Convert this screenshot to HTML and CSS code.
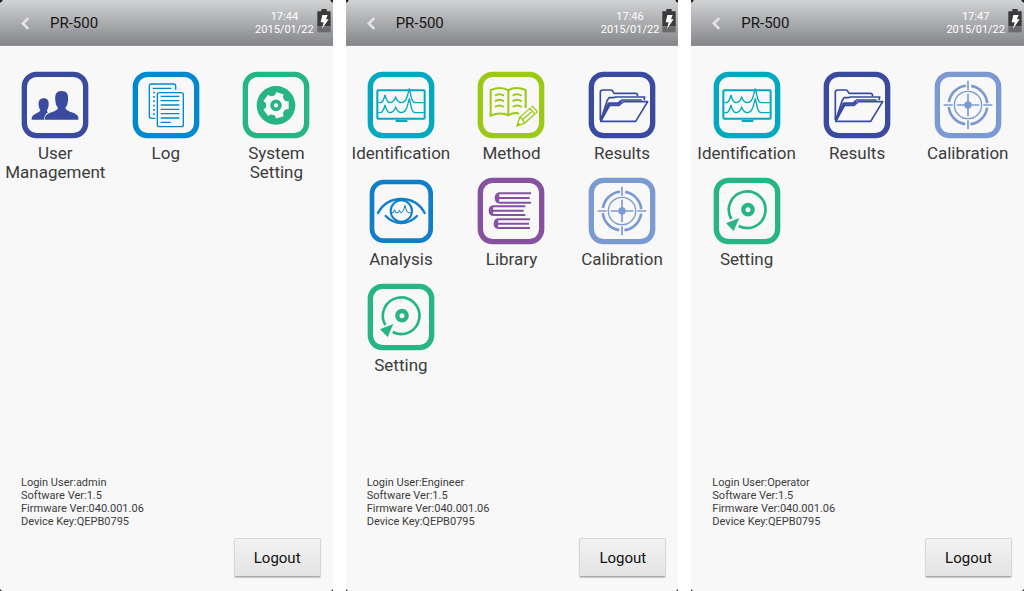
FILE: index.html
```html
<!DOCTYPE html>
<html lang="en">
<head>
  <meta charset="UTF-8">
  <meta name="viewport" content="width=device-width, initial-scale=1.0">
  <title>PR-500</title>
  <link rel="stylesheet" href="styles.css">
</head>
<body>
  <!-- Icon set -->
  <svg class="sprite" aria-hidden="true">
    <symbol id="frame" viewBox="0 0 204 204">
      <rect x="10" y="10" width="184" height="184" rx="37" fill="none" stroke="currentColor" stroke-width="16"/>
    </symbol>
    <symbol id="back" viewBox="0 0 8 12">
      <path d="M7 1 L2 6 L7 11" fill="none" stroke="currentColor" stroke-width="2.4"/>
    </symbol>
    <symbol id="battery" viewBox="0 0 42 72">
      <path d="M13 0h16v7h12v45H1V7h12z" fill="#3a3a3c"/>
      <path d="M1 52h40v18H1z" fill="#6b6b6e"/>
      <path d="M16 18h16l-5 13h8L15 59l5-19h-9z" fill="#fff"/>
    </symbol>
    <symbol id="users" viewBox="0 0 204 204">
      <g fill="currentColor">
        <path d="M72 146v-7q2-9 20-15q19-7 19-13q-7-7-8-22c-2-21 4-29 19-29s21 8 19 29q-1 15-8 22q0 6 19 13q18 6 20 15v7z"/>
        <path d="M32 146v-6q2-7 15-13q10-4 11-9q-4-5-5-15c-1-15 4-21 15-21s16 6 15 21q-1 10-5 15q0 4 3 6q-10 6-11 14v8z"/>
      </g>
    </symbol>
    <symbol id="log" viewBox="0 0 204 204">
      <g fill="none" stroke="currentColor" stroke-width="4">
        <path d="M131 56V45q0-6-6-6H58q-6 0-6 6v91q0 6 6 6h12M62 52h56"/>
        <path d="M66 62v72" stroke-width="5" stroke-dasharray="5 8"/>
        <rect x="76" y="65" width="78" height="102" rx="6"/>
        <path d="M86 76h56M86 89h56M86 102h56M86 115h56M86 128h56M86 141h56M86 154h30"/>
      </g>
    </symbol>
    <symbol id="gear" viewBox="0 0 204 204">
      <circle cx="102" cy="103" r="58" fill="currentColor"/>
      <g class="cutout">
        <circle cx="102" cy="103" r="30"/>
        <path id="tooth" d="M122 86l11 5h7v24h-7l-11 5z"/>
        <use href="#tooth" transform="rotate(72 102 103)"/>
        <use href="#tooth" transform="rotate(144 102 103)"/>
        <use href="#tooth" transform="rotate(216 102 103)"/>
        <use href="#tooth" transform="rotate(288 102 103)"/>
      </g>
      <circle cx="102" cy="103" r="12" fill="none" stroke="currentColor" stroke-width="11"/>
    </symbol>
    <symbol id="monitor" viewBox="0 0 204 204">
      <g fill="none" stroke="currentColor" stroke-width="4">
        <rect x="31" y="58" width="142" height="85" rx="3" stroke-width="6"/>
        <path d="M86 150h35" stroke-width="6"/>
        <path d="M34 95h6c7 0 10-7 14-23c4 16 7 23 15 23s12-3 17-16c5 13 9 16 17 16c13 0 17-13 24-43c7 33 8 43 19 43h24"/>
        <path d="M34 125h6c7 0 10-7 14-23c4 16 7 23 15 23s12-3 17-16c5 13 9 16 17 16c13 0 17-13 24-43c7 33 8 43 19 43h24"/>
      </g>
    </symbol>
    <symbol id="book" viewBox="0 0 204 204">
      <g fill="none" stroke="currentColor" stroke-width="6">
        <path d="M94 58Q72 44 41 57V134Q70 122 94 133Q112 123 126 128M94 133V58Q116 44 146 57V111"/>
        <path d="M54 74q13-9 27 0M54 91q13-9 27 0M54 108q13-9 27 0M107 74q13-9 27 0M107 91q13-9 27 0M107 108q13-9 27 0" stroke-width="6"/>
        <path d="M120 165l8-26l31-27l15 17l-32 28zM128 139q11 3 14 18M163 109l4-3l14 16l-4 4M135 147l29-25" stroke-width="4"/>
        <path d="M120 165l3-11l8 7z" fill="currentColor" stroke="none"/>
      </g>
    </symbol>
    <symbol id="folder" viewBox="0 0 204 204">
      <g fill="none" stroke="currentColor" stroke-width="5" stroke-linejoin="round">
        <path d="M37 148V64q0-7 7-7h25q4 0 6 5l3 5h65q6 0 6 9"/>
        <path d="M38 149l19-59l6-10h13l7-2h87l-2 9"/>
        <path d="M38 149l24-52h28l11-10h60"/>
        <path d="M38 151l27-48h28l13-11h73l-36 59z"/>
        <path d="M38 148l24-50h29l8-8" stroke-width="7"/>
      </g>
    </symbol>
    <symbol id="eye" viewBox="0 0 204 204">
      <g fill="none" stroke="currentColor" stroke-width="7" stroke-linecap="round">
        <rect x="15" y="15" width="176" height="176" rx="35" stroke-width="14"/>
        <path d="M33 108C48 80 73 66 103 66s55 14 70 42"/>
        <path d="M56 117q20 21 47 21t47-21"/>
        <circle cx="103" cy="102" r="32" stroke-width="6"/>
        <path d="M74 107h5l4-9l3 9h7l4-7l4 7q8 0 13-22q5 22 10 22h6" stroke-width="3"/>
      </g>
    </symbol>
    <symbol id="books" viewBox="0 0 204 204">
      <g fill="none" stroke="currentColor" stroke-width="6">
        <path d="M162 49H70q-14 0-14 14t14 14H162M66 63h92"/>
        <path d="M145 88H52q-14 0-14 13t14 13H145M48 101h92"/>
        <path d="M159 127H67q-14 0-14 13t14 13H159M63 140h93"/>
        <path d="M62 52v22M44 91v20M59 130v20" stroke-width="9"/>
      </g>
    </symbol>
    <symbol id="target" viewBox="0 0 204 204">
      <g fill="none" stroke="currentColor" stroke-width="5">
        <circle cx="102" cy="102" r="58" stroke-width="8" stroke-dasharray="75.1 16" stroke-dashoffset="-8"/>
        <circle cx="102" cy="102" r="41" stroke-width="4"/>
        <path d="M102 29v27M102 148v27M29 102h27M148 102h27M102 68v68M68 102h68"/>
        <circle cx="102" cy="102" r="11" fill="currentColor" stroke="none"/>
      </g>
    </symbol>
    <symbol id="disc" viewBox="0 0 204 204">
      <g fill="none" stroke="currentColor" stroke-width="8">
        <path d="M55 126A55 55 0 1 1 77 147"/>
        <circle cx="105" cy="98" r="14" stroke-width="13"/>
        <path d="M39 139l40-16l-17 39z" fill="currentColor" stroke="none"/>
      </g>
    </symbol>
  </svg>

  <main class="screens">
    <section class="screen">
      <header class="topbar">
        <button class="back" aria-label="Back"><svg><use href="#back"/></svg></button>
        <h1>PR-500</h1>
        <div class="clock">17:44<br>2015/01/22</div>
        <svg class="battery"><use href="#battery"/></svg>
      </header>
      <nav class="apps">
        <a href="#" class="app indigo"><svg><use href="#frame"/><use href="#users"/></svg><span>User Management</span></a>
        <a href="#" class="app blue"><svg><use href="#frame"/><use href="#log"/></svg><span>Log</span></a>
        <a href="#" class="app green"><svg><use href="#frame"/><use href="#gear"/></svg><span>System Setting</span></a>
      </nav>
      <footer class="bottom">
        <p class="info">Login User:admin<br>Software Ver:1.5<br>Firmware Ver:040.001.06<br>Device Key:QEPB0795</p>
        <button class="logout">Logout</button>
      </footer>
    </section>

    <section class="screen">
      <header class="topbar">
        <button class="back" aria-label="Back"><svg><use href="#back"/></svg></button>
        <h1>PR-500</h1>
        <div class="clock">17:46<br>2015/01/22</div>
        <svg class="battery"><use href="#battery"/></svg>
      </header>
      <nav class="apps">
        <a href="#" class="app teal"><svg><use href="#frame"/><use href="#monitor"/></svg><span>Identification</span></a>
        <a href="#" class="app lime"><svg><use href="#frame"/><use href="#book"/></svg><span>Method</span></a>
        <a href="#" class="app indigo"><svg><use href="#frame"/><use href="#folder"/></svg><span>Results</span></a>
        <a href="#" class="app azure"><svg><use href="#eye"/></svg><span>Analysis</span></a>
        <a href="#" class="app purple"><svg><use href="#frame"/><use href="#books"/></svg><span>Library</span></a>
        <a href="#" class="app steel"><svg><use href="#frame"/><use href="#target"/></svg><span>Calibration</span></a>
        <a href="#" class="app green"><svg><use href="#frame"/><use href="#disc"/></svg><span>Setting</span></a>
      </nav>
      <footer class="bottom">
        <p class="info">Login User:Engineer<br>Software Ver:1.5<br>Firmware Ver:040.001.06<br>Device Key:QEPB0795</p>
        <button class="logout">Logout</button>
      </footer>
    </section>

    <section class="screen">
      <header class="topbar">
        <button class="back" aria-label="Back"><svg><use href="#back"/></svg></button>
        <h1>PR-500</h1>
        <div class="clock">17:47<br>2015/01/22</div>
        <svg class="battery"><use href="#battery"/></svg>
      </header>
      <nav class="apps">
        <a href="#" class="app teal"><svg><use href="#frame"/><use href="#monitor"/></svg><span>Identification</span></a>
        <a href="#" class="app indigo"><svg><use href="#frame"/><use href="#folder"/></svg><span>Results</span></a>
        <a href="#" class="app steel"><svg><use href="#frame"/><use href="#target"/></svg><span>Calibration</span></a>
        <a href="#" class="app green"><svg><use href="#frame"/><use href="#disc"/></svg><span>Setting</span></a>
      </nav>
      <footer class="bottom">
        <p class="info">Login User:Operator<br>Software Ver:1.5<br>Firmware Ver:040.001.06<br>Device Key:QEPB0795</p>
        <button class="logout">Logout</button>
      </footer>
    </section>
  </main>
</body>
</html>
```
FILE: styles.css
```css
* {
  box-sizing: border-box;
  margin: 0;
  padding: 0;
}

body {
  background: white;
  font-family: Roboto, Arial, sans-serif;
  color: #3c3c3c;
}

.sprite {
  display: block;
  width: 0;
  height: 0;
}

.screens {
  display: grid;
  grid-template-columns: repeat(3, 1fr);
  gap: 13px;
  min-height: 100vh;
}

/* dark corners of the device display */
.screen {
  display: flex;
  flex-direction: column;
  background:
    radial-gradient(circle at 0 100%, #222 1px, transparent 2px),
    radial-gradient(circle at 100% 100%, #222 1px, transparent 2px),
    #f8f8f8;
}

.topbar {
  display: flex;
  align-items: center;
  height: 46px;
  padding: 1px 2px 0 20px;
  background:
    radial-gradient(circle at 0 0, #222 2px, transparent 3px),
    radial-gradient(circle at 100% 0, #222 2px, transparent 3px),
    linear-gradient(#d2d3d4, #85868a);
  border-bottom: 1px solid #8e8f92;
}

.back {
  width: 30px;
  height: 30px;
  background: none;
  border: none;
  color: #e4e4e4;
  text-align: left;
  cursor: pointer;
}

.back svg {
  display: block;
  width: 10px;
  height: 13px;
}

h1 {
  flex: 1;
  font-size: 15px;
  font-weight: normal;
  color: #161616;
}

.clock {
  font-size: 11px;
  line-height: 13px;
  text-align: center;
  color: white;
}

.battery {
  width: 14px;
  height: 24px;
  margin: 0 0 4px 3px;
}

.apps {
  flex: 1;
  display: grid;
  grid-template-columns: repeat(3, 1fr);
  align-content: start;
  row-gap: 14px;
  padding: 25px 1px 0 0;
}

.app {
  display: flex;
  flex-direction: column;
  align-items: center;
  gap: 5px;
  font-size: 17px;
  line-height: 19px;
  text-align: center;
  text-decoration: none;
}

.app svg {
  width: 68px;
  height: 68px;
}

.app span {
  color: #3c3c3c;
}

.cutout {
  fill: #f8f8f8;
}

.indigo { color: #394a9f; }
.blue { color: #0088d0; }
.green { color: #27b584; }
.teal { color: #00a9bf; }
.lime { color: #9cca14; }
.azure { color: #0e7fc8; }
.purple { color: #8651a0; }
.steel { color: #7c9ad2; }

.bottom {
  display: flex;
  flex-direction: column;
  gap: 10px;
  padding: 0 12px 14px 21px;
}

.info {
  font-size: 11px;
  line-height: 13px;
}

.logout {
  align-self: flex-end;
  width: 87px;
  height: 39px;
  background: linear-gradient(#f2f2f2, #e4e4e4);
  border: 1px solid #d8d8d8;
  border-bottom-color: #aaa;
  border-radius: 2px;
  box-shadow: 0 1px 1px rgba(0, 0, 0, 0.2);
  font-family: inherit;
  font-size: 15px;
  color: #111;
  cursor: pointer;
}
```
